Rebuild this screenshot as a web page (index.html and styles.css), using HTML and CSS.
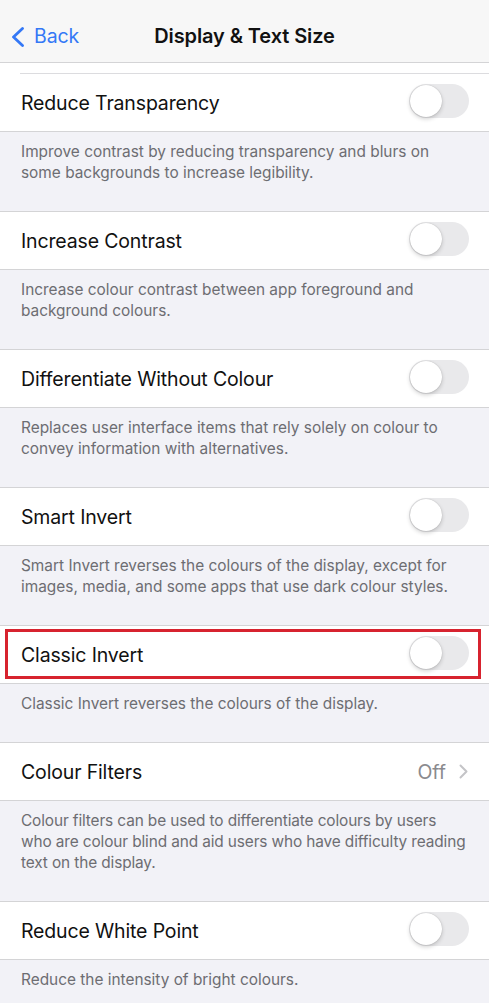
FILE: index.html
```html
<!DOCTYPE html>
<html>
<head>
<meta charset="utf-8">
<link rel="stylesheet" href="styles.css">
</head>
<body>
<div class="screen">
  <header class="nav">
    <div class="back">
      <svg class="back-chev" width="14" height="20" viewBox="0 0 14 20"><path d="M11.5 1.5 L2.5 10 L11.5 18.5" fill="none" stroke="#3478f6" stroke-width="2.8" stroke-linecap="round" stroke-linejoin="round"/></svg>
      <span class="back-label">Back</span>
    </div>
    <div class="nav-title">Display &amp; Text Size</div>
  </header>

  <div class="top-stub"><div class="stub-sep"></div></div>

  <div class="row"><span class="label">Reduce Transparency</span><span class="toggle"><span class="knob"></span></span></div>
  <div class="footer">Improve contrast by reducing transparency and blurs on some backgrounds to increase legibility.</div>

  <div class="row"><span class="label">Increase Contrast</span><span class="toggle"><span class="knob"></span></span></div>
  <div class="footer">Increase colour contrast between app foreground and background colours.</div>

  <div class="row"><span class="label">Differentiate Without Colour</span><span class="toggle"><span class="knob"></span></span></div>
  <div class="footer">Replaces user interface items that rely solely on colour to convey information with alternatives.</div>

  <div class="row"><span class="label">Smart Invert</span><span class="toggle"><span class="knob"></span></span></div>
  <div class="footer">Smart Invert reverses the colours of the display, except for images, media, and some apps that use dark colour styles.</div>

  <div class="row highlighted"><span class="label">Classic Invert</span><span class="toggle"><span class="knob"></span></span><span class="redbox"></span></div>
  <div class="footer">Classic Invert reverses the colours of the display.</div>

  <div class="row"><span class="label">Colour Filters</span><span class="detail">Off<svg class="chev" width="9" height="15" viewBox="0 0 9 15"><path d="M1.5 1.5 L7.5 7.5 L1.5 13.5" fill="none" stroke="#c4c4c7" stroke-width="2" stroke-linecap="round" stroke-linejoin="round"/></svg></span></div>
  <div class="footer tight">Colour filters can be used to differentiate colours by users who are colour blind and aid users who have difficulty reading text on the display.</div>

  <div class="row"><span class="label">Reduce White Point</span><span class="toggle"><span class="knob"></span></span></div>
  <div class="footer">Reduce the intensity of bright colours.</div>
</div>
</body>
</html>
```

FILE: styles.css
```css
html, body {
  margin: 0;
  padding: 0;
  background: #f2f2f7;
}
body {
  font-family: Inter, "Noto Sans", "Liberation Sans", sans-serif;
  -webkit-font-smoothing: antialiased;
}
.screen {
  width: 489px;
  height: 1003px;
  overflow: hidden;
  background: #f2f2f7;
}
.nav {
  box-sizing: border-box;
  height: 63px;
  padding-top: 10px;
  background: #f7f7f7;
  border-bottom: 1px solid #d4d4d6;
  display: flex;
  align-items: center;
  position: relative;
}
.back {
  display: flex;
  align-items: center;
  padding-left: 11px;
  gap: 9px;
  color: #3478f6;
  font-size: 19.5px;
}
.back-chev { display: block; margin-top: 1px; }
.back-label { letter-spacing: -0.1px; }
.nav-title {
  position: absolute;
  left: 0;
  right: 0;
  top: 10px;
  bottom: 0;
  display: flex;
  align-items: center;
  justify-content: center;
  font-size: 20px;
  font-weight: 600;
  color: #111;
  letter-spacing: -0.1px;
  pointer-events: none;
}
.top-stub {
  height: 11px;
  background: #fff;
  position: relative;
}
.stub-sep {
  position: absolute;
  left: 20px;
  right: 0;
  bottom: 0;
  height: 1px;
  background: #dcdcdf;
}
.row {
  height: 57px;
  background: #fff;
  border-bottom: 1px solid #d4d4d6;
  display: flex;
  align-items: center;
  justify-content: space-between;
  padding: 0 20px 0 21px;
  position: relative;
}
.label {
  font-size: 19.5px;
  color: #111;
  letter-spacing: -0.15px;
}
.toggle {
  width: 60px;
  height: 34px;
  border-radius: 17px;
  background: #e9e9eb;
  position: relative;
  margin-top: -3px;
}
.knob {
  position: absolute;
  left: 1px;
  top: 1px;
  width: 32px;
  height: 32px;
  border-radius: 50%;
  background: #fff;
  box-shadow: 0 2px 4px rgba(0,0,0,0.18), 0 0 1px rgba(0,0,0,0.25);
}
.detail {
  display: flex;
  align-items: center;
  gap: 13px;
  font-size: 19.5px;
  color: #8a8a8e;
  padding-right: 1px;
}
.chev { display: block; }
.footer {
  padding: 9px 20px 28px 21px;
  font-size: 15.4px;
  line-height: 21px;
  color: #6d6d72;
  border-bottom: 1px solid #d4d4d6;
  background: #f2f2f7;
}
.footer.tight {
  letter-spacing: -0.12px;
}
.redbox {
  position: absolute;
  left: 5px;
  top: 3px;
  width: 470px;
  height: 44px;
  border: 3px solid #d7232f;
  pointer-events: none;
}
```
